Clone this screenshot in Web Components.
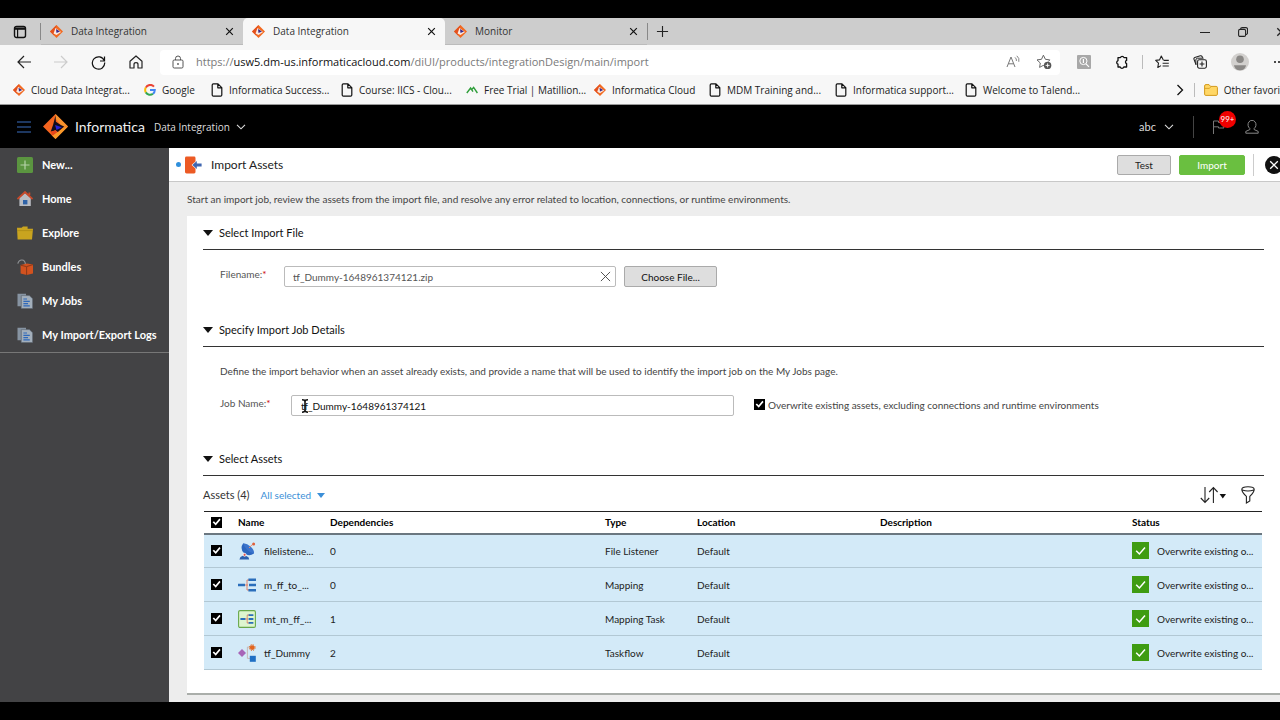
<!DOCTYPE html>
<html lang="en">
<head>
<meta charset="utf-8">
<title>Data Integration</title>
<style>
  html, body { margin: 0; background: #000; }
  body { font-family: Lato, "Liberation Sans", sans-serif; font-size: 10px; line-height: 16px; color: #222; overflow-x: hidden; }
</style>
</head>
<body>
<import-app></import-app>
<script>
const ICONS = {
  logo: ['0 0 26 26', `<path d="M13 0 0 13l13 13 13-13z" fill="#f4641f"/><path d="M13 0l13 13-6 .6-7-9z" fill="#f7922c"/><path d="M9 22l4 4 13-13-5 1-6 5z" fill="#f89a2a"/><path d="M13 1.500 10.600 11 8 18.500l5-1.500 2.400 1.600L22 13l-3.500-1.600L13.400 8z" fill="#120c1c"/><path d="M12.600 11.400 19.600 13.800 14 16.600z" fill="#2a22d8"/><path d="M8 18.500 13 17l1.600 2L10 22.600z" fill="#e8481b"/>`],
  fav: ['0 0 26 26', `<path d="M13 0 0 13l13 13 13-13z" fill="#f26a21"/><path d="M13 0 0 13l8 8 3-12z" fill="#e4511d"/><path d="M11 6l11 8-9 6-6-3z" fill="#fbe9e0"/><path d="M12 8l8 5-7 3z" fill="#3a2a8c"/>`],
  tabs: ['0 0 14 14', `<rect x="1.5" y="1.5" width="11" height="11" rx="2" fill="none" stroke="#111" stroke-width="1.4"/><path d="M1 2.5h12v2.3H1z" fill="#111"/><path d="M4.6 4v8.5" stroke="#111" stroke-width="1.2"/>`],
  x: ['0 0 10 10', `<path d="M1.3 1.3l7.4 7.4M8.7 1.3 1.3 8.7" stroke="currentColor" stroke-width="1.3" fill="none"/>`],
  thinx: ['0 0 12 12', `<path d="M1 1l10 10M11 1 1 11" stroke="#444" stroke-width="1" fill="none"/>`],
  plus: ['0 0 14 14', `<path d="M7 1v12M1 7h12" stroke="#222" stroke-width="1.2"/>`],
  min: ['0 0 10 10', `<path d="M0 5.5h10" stroke="#222"/>`],
  max: ['0 0 10 10', `<rect x=".6" y="2.4" width="7" height="7" rx="1.4" fill="none" stroke="#222" stroke-width="1.1"/><path d="M2.5 2.2Q2.7.6 4.2.6H8Q9.5.6 9.5 2.2V6Q9.5 7.4 7.8 7.6" fill="none" stroke="#222" stroke-width="1.1"/>`],
  back: ['0 0 14 14', `<path d="M14 7H1M7 1 1 7l6 6" fill="none" stroke="currentColor" stroke-width="1.2"/>`],
  fwd: ['0 0 14 14', `<path d="M0 7h13M7 1l6 6-6 6" fill="none" stroke="currentColor" stroke-width="1.2"/>`],
  reload: ['0 0 16 16', `<path d="M14.2 6.2A6.6 6.6 0 1 0 14.6 8" fill="none" stroke="#111" stroke-width="1.3"/><path d="M14.4 1.6v4.8H9.6" fill="none" stroke="#111" stroke-width="1.3"/>`],
  home: ['0 0 14 14', `<path d="M1 6.3 7 1l6 5.3V13H9V9.4Q9 7.6 7 7.6T5 9.4V13H1z" fill="none" stroke="#222" stroke-width="1.2" stroke-linejoin="round"/>`],
  lock: ['0 0 12 14', `<rect x="1" y="5" width="10" height="8" rx="1.2" fill="none" stroke="#555"/><path d="M3.5 5V3.5a2.5 2.5 0 0 1 5 0V5" fill="none" stroke="#555"/><circle cx="6" cy="9" r=".9" fill="#555"/>`],
  read: ['0 0 14 14', `<path d="M1 12 5 2l4 10M2.4 8.8h5.2" fill="none" stroke="#777"/><path d="M9 2.4q1.8 1.4 1.4 3.6M10.8.8q3 2.4 2 6" fill="none" stroke="#777" stroke-width=".9"/>`],
  staradd: ['0 0 16 16', `<path d="M9 12.2 7.2 11.4 3.6 13.4 4.3 9 1 5.9l4.5-.6L7.4 1.2l2 4.1 4.4.6-1.4 1.6" fill="none" stroke="#666"/><circle cx="11.6" cy="11.4" r="3.7" fill="#555"/><path d="M11.6 9.4v4M9.6 11.4h4" stroke="#fff" stroke-width=".9"/>`],
  lens: ['0 0 14 14', `<rect width="14" height="14" rx="1" fill="#a8a8a8"/><circle cx="6.4" cy="6" r="3.6" fill="none" stroke="#fff"/><path d="M9 8.8l3 3M6.4 4v4" stroke="#fff" stroke-width="1.2"/>`],
  puzzle: ['0 0 14 14', `<path d="M3 2.6h2.4a1.9 1.9 0 0 1 3.6 0H11.6V5.4a1.7 1.7 0 0 0 0 3.2V12H8.8a1.9 1.9 0 0 1-3.6 0H3V9.2a1.9 1.9 0 0 1 0-3.6z" fill="none" stroke="#111" stroke-width="1.3" stroke-linejoin="round"/>`],
  starlist: ['0 0 14 14', `<path d="M8.3 5 6.3 1 4.5 4.9.7 5.4l2.8 2.8-.7 4.3L6 10.6" fill="none" stroke="#222" stroke-width="1.1" stroke-linejoin="round"/><path d="M8.5 5.4h5.3M7.6 8.2h6.2M7.6 11h6.2" stroke="#222" stroke-width="1.1"/>`],
  collect: ['0 0 14 14', `<path d="M3 9.6 1 4.2Q.6 3 1.8 2.5L7.3.8Q8.6.5 9.2 1.8l.4 1" fill="none" stroke="#222" stroke-width="1.1"/><path d="M3 9.8 2.8 5Q3 3.2 4.6 3.2h6" fill="none" stroke="#222"/><rect x="4.6" y="4.8" width="8.8" height="8.4" rx="1.6" fill="none" stroke="#222" stroke-width="1.1"/><path d="M9 6.6V11.4M6.6 9h4.8" stroke="#222" stroke-width="1.1"/>`],
  avatar: ['0 0 18 18', `<circle cx="9" cy="9" r="9" fill="#d2d0ce"/><circle cx="9" cy="6.2" r="3.8" fill="#8a8886"/><path d="M3 12.2h12q-.6 5-6 5t-6-5z" fill="#8a8886"/>`],
  dots: ['0 0 14 4', `<circle cx="2" cy="2" r="1" fill="#111"/><circle cx="6" cy="2" r="1" fill="#111"/><circle cx="10" cy="2" r="1" fill="#111"/>`],
  google: ['0 0 12 12', `<path d="M10 2.6A5 5 0 0 0 1.8 3.6" fill="none" stroke="#ea4335" stroke-width="2"/><path d="M1.8 3.6a5 5 0 0 0 0 4.8" fill="none" stroke="#fbbc05" stroke-width="2"/><path d="M1.8 8.4A5 5 0 0 0 9 9.8" fill="none" stroke="#34a853" stroke-width="2"/><path d="M9 9.8A5 5 0 0 0 10.8 6H6" fill="none" stroke="#4285f4" stroke-width="2"/>`],
  page: ['0 0 12 14', `<path d="M1.2 2Q1.2.8 2.4.8H7L10.8 4.6V12Q10.8 13.2 9.6 13.2H2.4Q1.2 13.2 1.2 12zM6.8 1v3.8h3.8" fill="none" stroke="#111" stroke-width="1.2" stroke-linejoin="round"/>`],
  mat: ['0 0 12 12', `<path d="M.8 9 4.6 4 7 7.6M6 5.4 7.6 3.4 11.4 9" fill="none" stroke="#2f9e3a" stroke-width="1.4"/>`],
  chevr: ['0 0 8 12', `<path d="M1.5 1l5 5-5 5" fill="none" stroke="#111" stroke-width="1.3"/>`],
  chevd: ['0 0 10 6', `<path d="M1 .8l4 4 4-4" fill="none" stroke="#ddd" stroke-width="1.1"/>`],
  folder: ['0 0 14 12', `<path d="M.6 2Q.6.6 2 .6h3L6.6 2.4h5.6Q13.4 2.4 13.4 3.6v6.6q0 1.2-1.2 1.2H1.8Q.6 11.4.6 10.2z" fill="#ffd766" stroke="#d39a1c"/><path d="M.8 4.4h4.6L7 2.6" fill="none" stroke="#d39a1c" stroke-width=".8"/>`],
  menu: ['0 0 14 12', `<path d="M0 1h14M0 6h14M0 11h14" stroke="#3a6fc0" stroke-width="1.2"/>`],
  flag: ['0 0 13 14', `<path d="M1.5 14V1h5v1.5H12L10.5 5 12 8H6.5V6.8h-5" fill="none" stroke="#777"/>`],
  user: ['0 0 14 14', `<path d="M4.8 8.4A4 4.4 0 1 1 9.2 8.4V9.6L13.2 11.4V13.2H.8V11.4L4.8 9.6z" fill="none" stroke="#888"/>`],
  add: ['0 0 16 16', `<rect width="16" height="16" rx="1.5" fill="#5b9540"/><path d="M8 3.5v9M3.5 8h9" stroke="#b5d2a8" stroke-width="1.2"/>`],
  house: ['0 0 16 16', `<path d="M2.4 7v8h11.4V7L8 2z" fill="#b9bcc2"/><path d="M.4 8 8 1l7.6 7M12.4 4V1.4" fill="none" stroke="#c8492a" stroke-width="1.8"/><rect x="6" y="9" width="4.4" height="4.4" fill="#2f63a8"/>`],
  explore: ['0 0 16 14', `<path d="M0 1.8h4.6L6 .6h4.6V2.8H16L15 13.4H.6z" fill="#c9a41f"/><path d="M0 4.6h16" stroke="#a98816" stroke-width=".7"/>`],
  bundle: ['0 0 16 16', `<path d="M.8 4.6Q2 .8 5 1T8.4 5" fill="none" stroke="#8f9295" stroke-width="1.2"/><path d="M3.600 6l6.400-1.600 6 1V14.400l-6.400 1.600-6-1.600z" fill="#d2521f"/><path d="M3.600 6.200 9.600 7.600l6.400-2M9.600 8v8" stroke="#7a3218" stroke-width=".8" fill="none"/>`],
  docs: ['0 0 16 16', `<path d="M.5.8h8.500v2.400H4v10H.5z" fill="#8794a2"/><path d="M4.2 2.6h8.2l3.2 3.200v9.800H4.200z" fill="#a3afbb" stroke="#59636e" stroke-width=".6"/><path d="M6.400 6h3.600M6.400 8.400h6.400M6.400 10.600h4.600M6.400 12.800h6.400" stroke="#2f69bb" stroke-width="1.2"/>`],
  import: ['0 0 18 18', `<path d="M2.5.6h7.6q1.4 0 1.4 1.4v3.4L7.6 9l3.9 3.6V16q0 1.4-1.4 1.4H2.5Q1 17.4 1 16V2Q1 .6 2.5.6z" fill="#ec5a24"/><path d="M8.4 9l4.4-4v2.6h4.8v2.8h-4.8V13z" fill="#3f66b0"/>`],
  closec: ['0 0 18 18', `<circle cx="9" cy="9" r="9" fill="#111"/><path d="M5.2 5.2l7.6 7.6M12.8 5.2l-7.6 7.6" stroke="#fff" stroke-width="1.3"/>`],
  tri: ['0 0 10 6', `<path d="M0 0h10L5 6z" fill="currentColor"/>`],
  sort: ['0 0 26 18', `<path d="M5 1v15M.8 12 5 16.4 9.2 12M13.4 17V2M9.2 6 13.4 1.6 17.6 6" fill="none" stroke="#222" stroke-width="1.1"/><path d="M19.6 8h6.4l-3.2 4.4z" fill="#111"/>`],
  funnel: ['0 0 14 18', `<path d="M.8 3.400Q.8.8 7 .8t6.200 2.600Q13.200 6 8.800 10.400V15l-3.400 2V10.400Q.8 6 .8 3.400zM1.200 4Q7 6 12.800 4" fill="none" stroke="#222" stroke-width="1.1"/>`],
  dish: ['0 0 18 18', `<path d="M5.2 1.2Q1.4 6.6 6 11t10 .6z" fill="#2c66bf"/><path d="M5.2 1.2Q9 1 12.8 4.8t3.2 6.8Q12 11 8.8 7.6T5.2 1.2z" fill="#3b74cc"/><path d="M1.4 17.4q.6-3 3-3.400l2-1.600 2.200 1.800q2.400.4 2.600 3.200z" fill="#2c5fae"/><path d="M11 6 14.4 2.4" stroke="#e58a70" stroke-width="1"/><circle cx="15.6" cy="1.900" r="1.500" fill="#e0603a"/><circle cx="6.600" cy="12.800" r="1.500" fill="#e0524a" stroke="#fff" stroke-width=".8"/>`],
  mapping: ['0 0 18 14', `<path d="M5 7h5M9 2v10M9 2h3M9 12h3" fill="none" stroke="#e0795c" stroke-width=".9"/><path d="M0 7h7M10.4 1.8H18M11 7h7M10.4 12.2H18" stroke="#2a6ebb" stroke-width="2.6"/>`],
  mtask: ['0 0 18 18', `<rect x=".6" y=".6" width="16.8" height="16.8" rx="1.4" fill="#def5cf" stroke="#69a84c" stroke-width="1.1"/><path d="M6 9h4M9.2 5v8M9 5h3M9 13h3" fill="none" stroke="#e0795c" stroke-width=".8"/><path d="M2.4 9h5M10.6 5.2h4.8M10.6 9h4.8M10.6 12.8h4.8" stroke="#2a6ebb" stroke-width="1.8"/>`],
  tflow: ['0 0 18 18', `<path d="M4 5l4 4-4 4-4-4z" fill="#a765b8"/><path d="M12 3H9.4v11.4H12" fill="none" stroke="#c4b3ae" stroke-width=".9"/><circle cx="14.2" cy="3.6" r="2.4" fill="#e2651f"/><circle cx="14.2" cy="3.6" r="2.9" fill="none" stroke="#e2651f" stroke-width="1" stroke-dasharray="1.3 1"/><rect x="11.8" y="11.8" width="6" height="6" fill="#1f6fc4"/>`],
  ok: ['0 0 17 17', `<rect width="17" height="17" fill="#3f9c12"/><path d="M4.2 8.8l3.2 3.2 5.6-6.4" fill="none" stroke="#fff" stroke-width="1.5"/>`],
  ibeam: ['0 0 8 14', `<path d="M1 .8q3 0 3 1.6V11.6q0 1.6-3 1.6M7 .8q-3 0-3 1.6M4 11.6q0 1.6 3 1.6" fill="none" stroke="#111" stroke-width="1.6"/>`]
};

const RESET = `
  * { box-sizing: border-box; }
  button { font: inherit; color: inherit; background: none; border: 0; padding: 0; margin: 0; display: inline-flex; align-items: center; justify-content: center; white-space: nowrap; }
  a { color: inherit; text-decoration: none; }
  input { font: inherit; color: inherit; margin: 0; }
  input[type=checkbox] { appearance: none; width: 11px; height: 11px; background: #000; display: block; flex: none; }
  input[type=checkbox]:checked::before { content: ""; display: block; width: 11px; height: 11px; background: #fff; clip-path: polygon(15% 50%, 27% 40%, 42% 57%, 76% 17%, 87% 28%, 43% 80%); }
`;

function define(name, css, html) {
  const template = document.createElement('template');
  customElements.define(name, class extends HTMLElement {
    constructor() {
      super();
      this.attachShadow({ mode: 'open' });
    }
    connectedCallback() {
      const attr = (key) => this.getAttribute(key) ?? '';
      template.innerHTML = `<style>${RESET}${css}</style>${typeof html === 'function' ? html(attr) : html}`;
      this.shadowRoot.replaceChildren(template.content.cloneNode(true));
    }
  });
}

define('ui-icon', `
  :host { display: inline-flex; flex: none; }
  svg { display: block; }
`, (attr) => {
  const [box, body] = ICONS[attr('name')];
  const [, , w, h] = box.split(' ').map(Number);
  const width = Number(attr('size')) || w;
  return `<svg width="${width}" height="${Math.round(width * h / w)}" viewBox="${box}" aria-hidden="true">${body}</svg>`;
});

define('browser-tab', `
  :host { display: flex; align-items: center; gap: 8px; width: 202px; height: 27px; padding: 0 9px; color: #333; border-bottom: 1px solid #bbb; }
  :host([active]) { background: #f7f7f7; border-radius: 5px 5px 0 0; border-color: #f7f7f7; }
  .title { flex: 1; }
  button { color: #111; }
`, `
  <ui-icon name="fav" size="13"></ui-icon>
  <span class="title"><slot></slot></span>
  <button aria-label="Close tab"><ui-icon name="x" size="9"></ui-icon></button>
`);

define('book-mark', `
  :host { display: block; white-space: nowrap; }
  a { display: flex; align-items: center; gap: 6px; }
`, (attr) => `<a href="#"><ui-icon name="${attr('icon')}" size="${attr('icon') === 'folder' ? 14 : 12}"></ui-icon><slot></slot></a>`);

define('browser-chrome', `
  :host { display: block; font-family: "Open Sans", "Noto Sans", sans-serif; background: #f7f7f7; border-bottom: 1px solid #999; overflow: hidden; color: #222; }
  .strip { display: flex; background: #cdcdcd; height: 27px; align-items: center; overflow: hidden; }
  .tabs-btn { width: 40px; flex: none; }
  .sep { width: 1px; height: 17px; background: #888; flex: none; }
  .strip .add { margin-left: 8px; }
  .win { margin-left: auto; display: flex; gap: 28px; margin-right: -6px; }
  .bar { display: flex; align-items: center; height: 34px; padding-left: 17px; overflow: hidden; }
  .nav { display: flex; align-items: center; gap: 23px; width: 143px; flex: none; }
  .fwd { color: #ccc; }
  .addr { flex: 1; display: flex; align-items: center; background: #fff; border-radius: 4px; height: 25px; padding: 0 8px 0 12px; }
  .url { flex: 1; font-size: 11px; margin-left: 12px; color: #7a7a7a; white-space: nowrap; outline: 0; }
  .url b { font-weight: 400; color: #111; }
  .addr .end { display: flex; gap: 16px; align-items: center; }
  .tools { display: flex; align-items: center; width: 220px; flex: none; padding-left: 17px; gap: 24px; overflow: hidden; }
  .tools .sep { height: 14px; background: #bbb; margin: 0 -12px 0 -11px; }
  .marks { display: grid; grid-template-columns: 131px 67px 130px 125px 128px 115px 126px 130px 1fr auto auto auto; height: 25px; align-items: center; padding: 0 0 4px 13px; margin-right: -14px; }
  .marks .sep { height: 14px; background: #bbb; margin: 0 9px 0 10px; }
`, `
  <div class="strip">
    <button class="tabs-btn" aria-label="Tab actions"><ui-icon name="tabs"></ui-icon></button>
    <span class="sep"></span>
    <browser-tab>Data Integration</browser-tab>
    <browser-tab active>Data Integration</browser-tab>
    <browser-tab>Monitor</browser-tab>
    <span class="sep"></span>
    <button class="add" aria-label="New tab"><ui-icon name="plus" size="13"></ui-icon></button>
    <div class="win">
      <button aria-label="Minimize"><ui-icon name="min"></ui-icon></button>
      <button aria-label="Restore"><ui-icon name="max"></ui-icon></button>
      <button aria-label="Close window"><ui-icon name="x"></ui-icon></button>
    </div>
  </div>
  <div class="bar">
    <div class="nav">
      <button aria-label="Back"><ui-icon name="back"></ui-icon></button>
      <button class="fwd" aria-label="Forward"><ui-icon name="fwd"></ui-icon></button>
      <button aria-label="Refresh"><ui-icon name="reload" size="15"></ui-icon></button>
      <button aria-label="Home"><ui-icon name="home"></ui-icon></button>
    </div>
    <div class="addr">
      <ui-icon name="lock"></ui-icon>
      <div class="url" role="textbox" contenteditable="true" spellcheck="false" aria-label="Address">https://<b>usw5.dm-us.informaticacloud.com</b>/diUI/products/integrationDesign/main/import</div>
      <div class="end">
        <button aria-label="Read aloud"><ui-icon name="read"></ui-icon></button>
        <button aria-label="Add to favorites"><ui-icon name="staradd"></ui-icon></button>
      </div>
    </div>
    <div class="tools">
      <button aria-label="Search extension"><ui-icon name="lens"></ui-icon></button>
      <button aria-label="Extensions"><ui-icon name="puzzle"></ui-icon></button>
      <span class="sep"></span>
      <button aria-label="Favorites"><ui-icon name="starlist"></ui-icon></button>
      <button aria-label="Collections"><ui-icon name="collect"></ui-icon></button>
      <button aria-label="Profile"><ui-icon name="avatar"></ui-icon></button>
      <button aria-label="More"><ui-icon name="dots"></ui-icon></button>
    </div>
  </div>
  <nav class="marks">
    <book-mark icon="fav">Cloud Data Integrat...</book-mark>
    <book-mark icon="google">Google</book-mark>
    <book-mark icon="page">Informatica Success...</book-mark>
    <book-mark icon="page">Course: IICS - Clou...</book-mark>
    <book-mark icon="mat">Free Trial | Matillion...</book-mark>
    <book-mark icon="fav">Informatica Cloud</book-mark>
    <book-mark icon="page">MDM Training and...</book-mark>
    <book-mark icon="page">Informatica support...</book-mark>
    <book-mark icon="page">Welcome to Talend...</book-mark>
    <button aria-label="More favorites"><ui-icon name="chevr"></ui-icon></button>
    <span class="sep"></span>
    <book-mark icon="folder">Other favorites</book-mark>
  </nav>
`);

define('app-header', `
  :host { display: flex; align-items: center; height: 43px; background: #000; color: #ddd; padding: 0 21px 0 17px; font-size: 11px; }
  .brand { display: flex; align-items: center; gap: 7px; margin-left: 12px; font-size: 14px; color: #eee; }
  .product { font-family: "Open Sans", sans-serif; font-size: 10px; gap: 6px; margin-left: 9px; }
  .right { margin-left: auto; display: flex; align-items: center; }
  .org { gap: 8px; }
  .sep { width: 1px; height: 22px; background: #444; margin: 0 18px 0 19px; }
  .flag { position: relative; margin-right: 20px; }
  .badge { position: absolute; left: 7px; top: -9px; width: 17px; height: 17px; border-radius: 50%; background: #f00000; color: #fff; font-size: 8px; line-height: 17px; text-align: center; }
`, `
  <button aria-label="Menu"><ui-icon name="menu"></ui-icon></button>
  <a class="brand" href="#"><ui-icon name="logo" size="25"></ui-icon>Informatica</a>
  <button class="product">Data Integration <ui-icon name="chevd"></ui-icon></button>
  <div class="right">
    <button class="org">abc <ui-icon name="chevd"></ui-icon></button>
    <span class="sep"></span>
    <button class="flag" aria-label="Notifications"><ui-icon name="flag"></ui-icon><span class="badge">99+</span></button>
    <button aria-label="User"><ui-icon name="user"></ui-icon></button>
  </div>
`);

define('nav-item', `
  :host { display: block; }
  a { display: flex; align-items: center; gap: 9px; height: 34px; padding-left: 17px; color: #fff; font-weight: 700; white-space: nowrap; }
`, (attr) => `<a href="#"><ui-icon name="${attr('icon')}" size="16"></ui-icon><slot></slot></a>`);

define('side-nav', `
  :host { display: block; background: #434345; font-size: 11px; }
  nav { border-bottom: 1px solid #777; }
`, `
  <nav>
    <nav-item icon="add">New...</nav-item>
    <nav-item icon="house">Home</nav-item>
    <nav-item icon="explore">Explore</nav-item>
    <nav-item icon="bundle">Bundles</nav-item>
    <nav-item icon="docs">My Jobs</nav-item>
    <nav-item icon="docs">My Import/Export Logs</nav-item>
  </nav>
`);

define('title-bar', `
  :host { display: flex; align-items: center; height: 34px; background: #fff; border-bottom: 1px solid #c8c8c8; padding-left: 7px; overflow: hidden; }
  .dot { width: 5px; height: 5px; border-radius: 50%; background: #2f8fdc; margin-right: 3px; }
  h1 { font-size: 12px; font-weight: 400; margin: 0 auto 0 9px; color: #222; }
  .btn { height: 20px; border-radius: 2px; border: 1px solid #aaa; background: #dedede; width: 54px; }
  .primary { background: #6abf40; border-color: #6abf40; color: #fff; width: 66px; margin-left: 8px; }
  .sep { width: 1px; height: 22px; background: #ccc; margin: 0 11px 0 8px; }
  .close { margin-right: -3px; }
`, `
  <span class="dot"></span><ui-icon name="import"></ui-icon>
  <h1>Import Assets</h1>
  <button class="btn">Test</button>
  <button class="btn primary">Import</button>
  <span class="sep"></span>
  <button class="close" aria-label="Close"><ui-icon name="closec"></ui-icon></button>
`);

define('panel-section', `
  :host { display: block; }
  h2 { margin: 0; height: 34px; border-bottom: 1px solid #333; font-size: 11px; font-weight: 400; color: #111; display: flex; }
  button { gap: 6px; }
`, (attr) => `<h2><button aria-expanded="true"><ui-icon name="tri"></ui-icon>${attr('heading')}</button></h2><slot></slot>`);

define('file-form', `
  :host { display: flex; align-items: flex-start; padding: 16px 0 26px 17px; color: #555; }
  label { width: 64px; }
  i { color: #c00; font-style: normal; }
  .field { display: flex; align-items: center; width: 332px; height: 21px; border: 1px solid #bbb; border-radius: 2px; padding: 0 4px 0 8px; margin-right: 8px; }
  input { border: 0; flex: 1; outline: 0; padding: 0; min-width: 0; background: none; }
  .choose { width: 93px; height: 21px; background: #dedede; border: 1px solid #aaa; border-radius: 2px; color: #111; }
`, `
  <label for="file">Filename:<i>*</i></label>
  <span class="field"><input id="file" value="tf_Dummy-1648961374121.zip"><button aria-label="Clear"><ui-icon name="thinx" size="11"></ui-icon></button></span>
  <button class="choose">Choose File...</button>
`);

define('job-form', `
  :host { display: block; padding: 16px 0 26px 17px; color: #444; }
  p { margin: 0 0 16px; }
  .row { display: flex; align-items: flex-start; }
  .name { width: 71px; color: #555; }
  i { color: #c00; font-style: normal; }
  .field { position: relative; width: 443px; margin-right: 20px; display: flex; }
  .field input { width: 100%; height: 21px; border: 1px solid #bbb; border-radius: 2px; padding: 0 9px; color: #111; }
  .field ui-icon { position: absolute; left: 10px; top: 4px; }
  .check { display: flex; align-items: center; gap: 3px; height: 19px; }
`, `
  <p>Define the import behavior when an asset already exists, and provide a name that will be used to identify the import job on the My Jobs page.</p>
  <div class="row">
    <label class="name" for="job">Job Name:<i>*</i></label>
    <span class="field"><input id="job" value="tf_Dummy-1648961374121"><ui-icon name="ibeam"></ui-icon></span>
    <label class="check"><input type="checkbox" checked>Overwrite existing assets, excluding connections and runtime environments</label>
  </div>
`);

const ASSETS = [
  ['dish', 'filelistene...', 0, 'File Listener'],
  ['mapping', 'm_ff_to_...', 0, 'Mapping'],
  ['mtask', 'mt_m_ff_...', 1, 'Mapping Task'],
  ['tflow', 'tf_Dummy', 2, 'Taskflow']
];

define('asset-table', `
  :host { display: block; }
  .head { display: flex; align-items: center; height: 35px; padding: 3px 9px 0 0; color: #333; font-size: 11px; }
  .all { color: #3b8fd8; font-size: 10px; gap: 6px; margin-left: 11px; }
  .tools { margin-left: auto; display: flex; align-items: center; gap: 15px; }
  table { border-collapse: collapse; table-layout: fixed; width: calc(100% - 3px); margin-left: 1px; color: #222; }
  th { text-align: left; font-weight: 700; height: 22px; border-top: 1px solid #222; border-bottom: 2px solid #6b7780; padding: 0; color: #000; }
  td { height: 34px; padding: 0; background: #d3eaf8; border-bottom: 1px solid #b2c8d4; white-space: nowrap; }
  th:first-child, td:first-child { padding-left: 7px; }
  .c { display: flex; align-items: center; gap: 8px; }
`, `
  <div class="head">Assets (4)
    <button class="all">All selected <ui-icon name="tri" size="8"></ui-icon></button>
    <div class="tools">
      <button aria-label="Sort"><ui-icon name="sort"></ui-icon></button>
      <button aria-label="Filter"><ui-icon name="funnel"></ui-icon></button>
    </div>
  </div>
  <table>
    <colgroup><col style="width:34px"><col style="width:92px"><col style="width:275px"><col style="width:92px"><col style="width:183px"><col><col style="width:130px"></colgroup>
    <thead><tr><th><input type="checkbox" checked aria-label="Select all"></th><th>Name</th><th>Dependencies</th><th>Type</th><th>Location</th><th>Description</th><th>Status</th></tr></thead>
    <tbody>${ASSETS.map(([icon, name, deps, type]) => `
      <tr><td><input type="checkbox" checked aria-label="Select ${name}"></td>
      <td><span class="c"><ui-icon name="${icon}"></ui-icon>${name}</span></td>
      <td>${deps}</td><td>${type}</td><td>Default</td><td></td>
      <td><span class="c"><ui-icon name="ok"></ui-icon>Overwrite existing o...</span></td></tr>`).join('')}
    </tbody>
  </table>
`);

define('import-app', `
  :host { display: flex; flex-direction: column; min-height: 100vh; padding: 18px 0; background: #000; box-sizing: border-box; }
  .body { flex: 1; display: grid; grid-template-columns: 169px minmax(0, 1fr); background: #ededed; }
  .hint { margin: 0; padding: 9px 0 9px 18px; color: #444; }
  .card { background: #fff; margin-left: 18px; padding: 0 16px 23px 16px; border-bottom: 2px solid #aaaeaa; }
`, `
  <browser-chrome></browser-chrome>
  <app-header></app-header>
  <div class="body">
    <side-nav></side-nav>
    <main>
      <title-bar></title-bar>
      <p class="hint">Start an import job, review the assets from the import file, and resolve any error related to location, connections, or runtime environments.</p>
      <div class="card">
        <panel-section heading="Select Import File"><file-form></file-form></panel-section>
        <panel-section heading="Specify Import Job Details"><job-form></job-form></panel-section>
        <panel-section heading="Select Assets"><asset-table></asset-table></panel-section>
      </div>
    </main>
  </div>
`);
</script>
</body>
</html>
